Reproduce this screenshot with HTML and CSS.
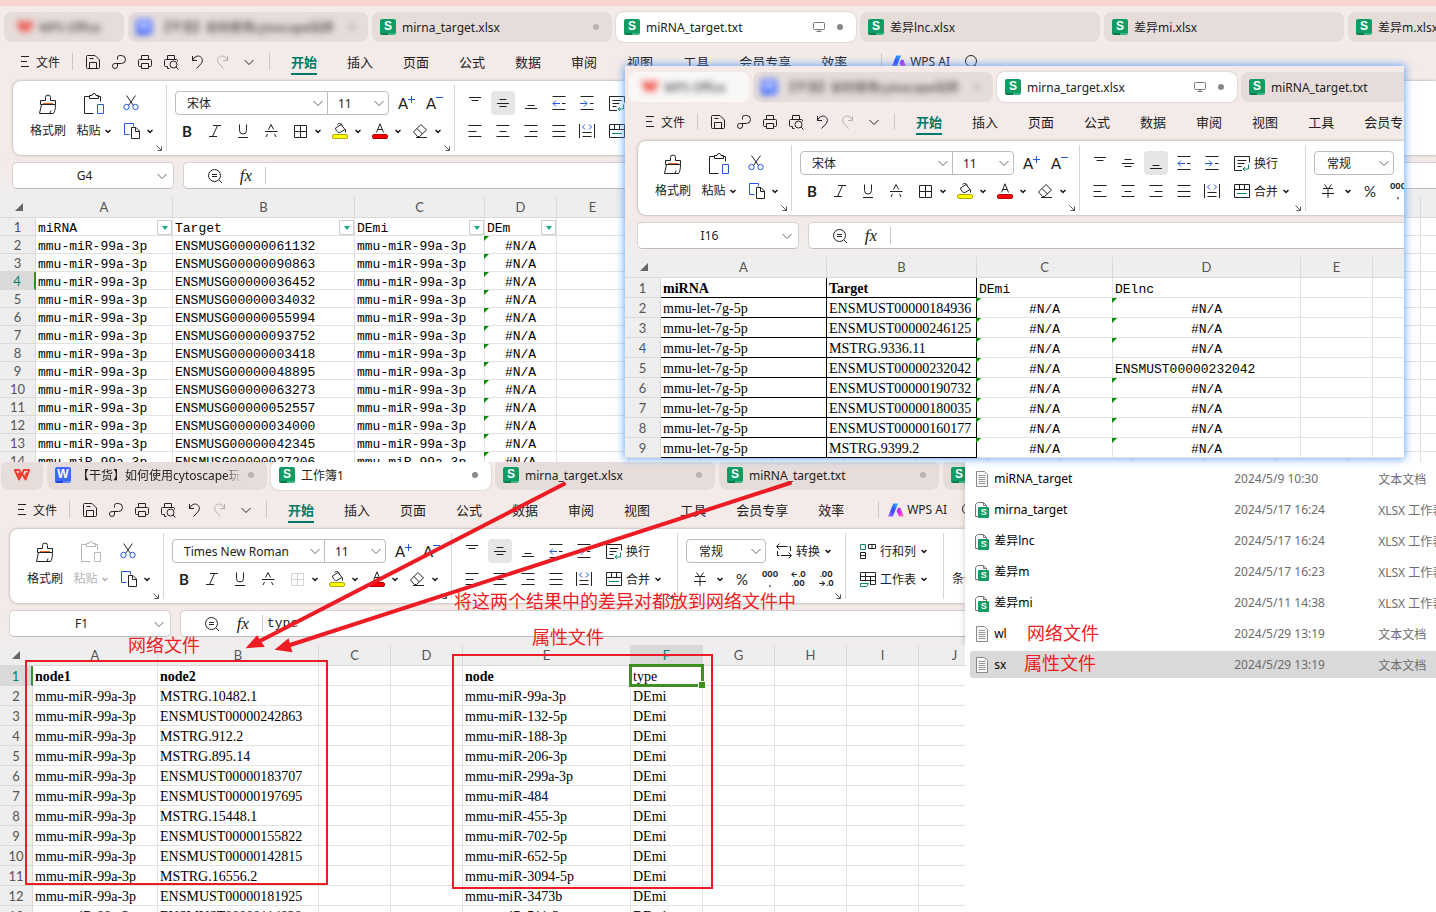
FILE: index.html
```html
<!DOCTYPE html>
<html lang="zh-CN">
<head>
    <meta charset="UTF-8">
    <meta name="viewport" content="width=device-width, initial-scale=1.0">
    <title>WPS Office</title>
    <link rel="stylesheet" href="styles.css">
</head>
<body>
    <!-- icons -->
    <svg class="sprite" aria-hidden="true">
        <symbol id="wps" viewBox="0 0 16 12">
            <path d="M.8 1h4.400l2.300 5L9.800 1h5.400l-3.600 9.500L8 4.500l-3 6z M4.200 4l1.600 3.200M12.800 3.500l-1.600 4" fill="none" stroke="#f03a2e" stroke-width="1.900" stroke-linejoin="round"/>
        </symbol>
        <symbol id="monitor" viewBox="0 0 12 12">
            <path d="M1.500 1.500h9a1 1 0 0 1 1 1v5a1 1 0 0 1-1 1h-9a1 1 0 0 1-1-1v-5a1 1 0 0 1 1-1zM6 8.500v2M3.500 10.500h5"/>
        </symbol>
        <symbol id="menu" viewBox="0 0 10 12"><path d="M1 .5h8M1 5.500h6M1 10.500h8"/></symbol>
        <symbol id="save" viewBox="0 0 16 16"><path d="M2.500 1.500h7.500l4.500 4.500v7.500a1 1 0 0 1-1 1h-11a1 1 0 0 1-1-1v-11a1 1 0 0 1 1-1zM4.500 14.500v-6h7v6M4.500 4.500h4"/></symbol>
        <symbol id="export" viewBox="0 0 16 16"><path d="M6.500 5.500v-2a2 2 0 0 1 2-2h2a4 4 0 0 1 0 8h-1.500M9.500 9.500H4.200a2.500 2.500 0 1 0 2.300 2.500V9.500"/></symbol>
        <symbol id="print" viewBox="0 0 16 16"><path d="M4.500 5.500v-4h7v4M4.500 12.500h-2a1 1 0 0 1-1-1v-5a1 1 0 0 1 1-1h11a1 1 0 0 1 1 1v5a1 1 0 0 1-1 1h-2M4.500 9.500h7v5h-7z"/></symbol>
        <symbol id="preview" viewBox="0 0 16 16"><path d="M4.500 5.500v-4h7v4M4.500 14.500v-2h-2a1 1 0 0 1-1-1v-5a1 1 0 0 1 1-1h11a1 1 0 0 1 1 1v1M4.500 14.500h2"/><circle cx="10.500" cy="10.500" r="3.500"/><path d="M13 13l2.500 2.500"/></symbol>
        <symbol id="undo" viewBox="0 0 16 16"><path d="M3.500 2v4.500H8M3.500 6.500C5 2.500 9 1 11.500 2.800c2.500 2 2.200 4.700.5 7L7.500 14.500"/></symbol>
        <symbol id="redo" viewBox="0 0 16 16"><path d="M12.500 2v4.500H8M12.500 6.500C11 2.500 7 1 4.500 2.800 2 4.800 2.300 7.500 4 9.800L8.500 14.500"/></symbol>
        <symbol id="chevron" viewBox="0 0 16 16"><path d="M3.500 6L8 10.500 12.500 6"/></symbol>
        <symbol id="arrow" viewBox="0 0 8 8"><path d="M1.500 3L4 5.300 6.500 3" stroke-width="1.600"/></symbol>
        <symbol id="ai" viewBox="0 0 15 13">
            <linearGradient id="ai-a" x1="0" y1="1" x2="1" y2="0"><stop offset="0" stop-color="#b06bff"/><stop offset=".5" stop-color="#2f4bff"/><stop offset="1" stop-color="#2fc0ff"/></linearGradient>
            <linearGradient id="ai-b" x1="0" y1="0" x2="1" y2="1"><stop offset="0" stop-color="#7a3cff"/><stop offset=".6" stop-color="#f02fe0"/><stop offset="1" stop-color="#ffb08a"/></linearGradient>
            <path d="M5 .5h4.500L4.500 12.500H0z" fill="url(#ai-a)" stroke="none"/>
            <path d="M9.500 4.500h2l3.500 8h-4.500L8 7.500z" fill="url(#ai-b)" stroke="none"/>
        </symbol>
        <symbol id="search" viewBox="0 0 16 16"><circle cx="7" cy="7" r="5.500"/><path d="M11 11l4 4"/></symbol>
        <symbol id="zoom-out" viewBox="0 0 16 16"><circle cx="7.500" cy="7.500" r="6"/><path d="M5 6.500h5M5 8.500h5M12 12l3 3"/></symbol>
        <symbol id="painter" viewBox="0 0 22 22"><path d="M3.500 7.500h5v-3a2.500 2.500 0 0 1 5 0v3h5v4h-15zM4.500 11.500l-2 9h14c1.500-2 2-5 2-9M14 17.500l-1 3"/><path d="M6 10.500h10" stroke="#e0641e"/></symbol>
        <symbol id="paste" viewBox="0 0 22 22"><path d="M6.500 3.500h-5v17h9M14.500 3.500h3v5M6.500 5.500v-3h2.500a2 2 0 0 1 4 0h2.500v3z"/><path class="blue" d="M14.500 11.500h6v9h-6z"/></symbol>
        <symbol id="cut" viewBox="0 0 16 16"><path d="M3.500.5l7 10M12.500.5l-7 10"/><circle class="blue" cx="3.500" cy="12" r="2.700"/><circle class="blue" cx="12.500" cy="12" r="2.700"/></symbol>
        <symbol id="copy" viewBox="0 0 16 16"><path class="blue" d="M5.500 11.500h-5V.5h9v3"/><path d="M7.500 4.500h4.500l3.500 3.500v7.500h-8zM11.500 4.500V8.500h4"/></symbol>
        <symbol id="launcher" viewBox="0 0 6 6"><path d="M.5.5L5 5M5.500 1.500v4h-4"/></symbol>
        <symbol id="plus" viewBox="0 0 8 8"><path class="blue" d="M3.500 0v7M0 3.500h7"/></symbol>
        <symbol id="minus" viewBox="0 0 8 8"><path class="blue" d="M0 1.500h7"/></symbol>
        <symbol id="italic" viewBox="0 0 16 16"><path d="M6 2.500h8M2 13.500h8M10.500 2.500l-5 11"/></symbol>
        <symbol id="underline" viewBox="0 0 16 16"><path d="M4.500 1.500v6a3.500 3.500 0 0 0 7 0v-6M3 14.500h10"/></symbol>
        <symbol id="strike" viewBox="0 0 16 16"><path d="M2 8.500h12.500M5.500 6.500L8 1.500l2.700 5M4.500 11l-1.500 3M11.500 11l1.500 3"/></symbol>
        <symbol id="borders" viewBox="0 0 16 16"><path d="M2.500 2.500h12v12h-12zM8.500 2.500v12M2.500 8.500h12"/></symbol>
        <symbol id="fill" viewBox="0 0 16 16"><path d="M3.500 5L9 1.500l4 5L8 9.500c-2 .5-4-1.500-4.500-4.500zM5.500 1.500c2-2 4-1 5 1M13.500 6.500v3"/><rect x=".5" y="11.500" width="15" height="4" rx="1.500" fill="#ff0" stroke="#b5a900"/></symbol>
        <symbol id="color" viewBox="0 0 16 16"><path d="M4.500 9.500L8 .8l3.500 8.700M5.700 6.500h4.600"/><rect x=".5" y="11.500" width="15" height="4" rx="1.500" fill="#f00" stroke="#b50000"/></symbol>
        <symbol id="eraser" viewBox="0 0 16 16"><path d="M1.500 9L9 1.500 14.500 7 7.500 13.500H5.500zM5 5.500l5.500 5.500M4 14.500h11"/></symbol>
        <symbol id="top" viewBox="0 0 16 16"><path d="M2 2.500h12M4.500 5.500h7"/></symbol>
        <symbol id="middle" viewBox="0 0 16 16"><path d="M4.500 4.500h7M2 8.500h12M4.500 11.500h7"/></symbol>
        <symbol id="bottom" viewBox="0 0 16 16"><path d="M4.500 10.500h7M2 13.500h12"/></symbol>
        <symbol id="outdent" viewBox="0 0 16 16"><path d="M1.500 1.500h13M1.500 14.500h13M11 8.500h3.500"/><path class="blue" d="M9 8.500H2M5 5.500l-3 3 3 3"/></symbol>
        <symbol id="indent" viewBox="0 0 16 16"><path d="M1.500 1.500h13M1.500 14.500h13M11 8.500h3.500"/><path class="blue" d="M1 8.500h7M5 5.500l3 3-3 3"/></symbol>
        <symbol id="left" viewBox="0 0 16 16"><path d="M1.500 2.500h13M1.500 8.500h8M1.500 13.500h13"/></symbol>
        <symbol id="center" viewBox="0 0 16 16"><path d="M1.500 2.500h13M4.500 8.500h7M1.500 13.500h13"/></symbol>
        <symbol id="right" viewBox="0 0 16 16"><path d="M1.500 2.500h13M6.500 8.500h8M1.500 13.500h13"/></symbol>
        <symbol id="justify" viewBox="0 0 16 16"><path d="M1.500 2.500h13M1.500 8.500h13M1.500 13.500h13"/></symbol>
        <symbol id="spread" viewBox="0 0 16 16"><path d="M.5 1v14M15.500 1v14M3.500 9.500h9M3.500 13.500h9"/><path class="blue" d="M6 1.500l-2.500 2.500L6 6.500M10 1.500l2.500 2.500L10 6.500"/></symbol>
        <symbol id="wrap" viewBox="0 0 16 16"><path d="M8 15.500H.5V1.500h15v6M3.500 5.500h9M3.500 8.500h7M3.500 11.500h4"/><path class="green" d="M14.500 9.500v4.500h-5M11 12l-2 2 2 2"/></symbol>
        <symbol id="merge" viewBox="0 0 16 16"><path d="M.5 1.500h15v13H.5zM.5 6.500h15M5.500 1.500v5M10.500 1.500v5"/><path class="green" d="M3 10.500h10"/></symbol>
        <symbol id="currency" viewBox="0 0 16 16"><path d="M4.500 1.500L7 5M11.500 1.500L9 5M3 5.500h10M2 10.500h12M8 5.500V15"/></symbol>
        <symbol id="convert" viewBox="0 0 16 16"><path d="M3.500.5l-3 3 3 3M1 3.500h10.500M1.500 8v4.500h2M14.500 8V3.500h-1M5 12.500h10M12.500 9.500l3 3-3 3"/></symbol>
        <symbol id="rowcol" viewBox="0 0 16 16"><path class="green" d="M.5 1.500h5v5h-5z"/><path d="M8.500 1.500h7v4h-7zM12 1.500v4M.5 9.500h5v6h-5zM.5 12.500h5"/></symbol>
        <symbol id="worksheet" viewBox="0 0 16 16"><path d="M.5 10V1.500h15v12H10M.5 5.500h15M5.500 1.500v8M10.500 5.500v8M.5 9.500h15"/><path class="green" d="M.5 12.500h8l-2 3h-6z"/></symbol>
        <symbol id="corner" viewBox="0 0 8 8"><path d="M8 0v8H0z" fill="#666" stroke="none"/></symbol>
        <symbol id="txt-file" viewBox="0 0 14 16"><path d="M1.500.5h8l3 3v12h-11z" fill="#fafafa" stroke="#888"/><path d="M3.500 4.500h7M3.500 6.500h7M3.500 8.500h7M3.500 10.500h7M3.500 12.500h7" stroke="#999"/></symbol>
        <symbol id="xlsx-file" viewBox="0 0 14 16"><path d="M3 14.500H.5V2.500l2-2h6l3 3V5M8.500.5v3h3" fill="#fff" stroke="#777"/><rect x="3" y="5" width="11" height="11" rx="1" fill="#0f9d63" stroke="none"/></symbol>
    </svg>

    <!-- menu, ribbon and formula bar, the same in every window -->
    <template id="toolbar">
        <nav class="menu">
            <button class="file"><svg class="burger"><use href="#menu"/></svg>文件</button>
            <span class="sep"></span>
            <div class="quick">
                <button aria-label="保存"><svg><use href="#save"/></svg></button>
                <button aria-label="输出为PDF"><svg><use href="#export"/></svg></button>
                <button aria-label="打印"><svg><use href="#print"/></svg></button>
                <button aria-label="打印预览"><svg><use href="#preview"/></svg></button>
                <button aria-label="撤销"><svg><use href="#undo"/></svg></button>
                <button aria-label="恢复" class="off"><svg><use href="#redo"/></svg></button>
                <button aria-label="更多"><svg><use href="#chevron"/></svg></button>
            </div>
            <span class="sep"></span>
            <div class="menu-tabs">
                <a href="#" class="current">开始</a>
                <a href="#">插入</a>
                <a href="#">页面</a>
                <a href="#">公式</a>
                <a href="#">数据</a>
                <a href="#">审阅</a>
                <a href="#">视图</a>
                <a href="#">工具</a>
                <a href="#">会员专享</a>
                <a href="#">效率</a>
            </div>
            <span class="sep"></span>
            <button class="ai"><svg><use href="#ai"/></svg>WPS AI</button>
            <button aria-label="搜索"><svg><use href="#search"/></svg></button>
        </nav>

        <div class="ribbon">
            <div class="group clipboard">
                <button class="big"><svg><use href="#painter"/></svg><span>格式刷</span></button>
                <button class="big paste"><svg><use href="#paste"/></svg><span>粘贴<svg class="arrow"><use href="#arrow"/></svg></span></button>
                <div class="rows">
                    <div class="row"><button class="tool" aria-label="剪切"><svg><use href="#cut"/></svg></button></div>
                    <div class="row"><button class="tool split" aria-label="复制"><svg><use href="#copy"/></svg><svg class="arrow"><use href="#arrow"/></svg></button></div>
                </div>
                <button class="launcher" aria-label="剪贴板设置"><svg><use href="#launcher"/></svg></button>
            </div>
            <div class="group font">
                <div class="rows">
                    <div class="row">
                        <div class="combo">
                            <span class="pick"><select class="font-name" aria-label="字体"><option>宋体</option><option>Times New Roman</option></select><svg><use href="#chevron"/></svg></span>
                            <span class="pick"><select class="font-size" aria-label="字号"><option>11</option></select><svg><use href="#chevron"/></svg></span>
                        </div>
                        <button class="tool size" aria-label="增大字号">A<svg><use href="#plus"/></svg></button>
                        <button class="tool size" aria-label="减小字号">A<svg><use href="#minus"/></svg></button>
                    </div>
                    <div class="row">
                        <button class="tool bold" aria-label="加粗">B</button>
                        <button class="tool" aria-label="倾斜"><svg><use href="#italic"/></svg></button>
                        <button class="tool" aria-label="下划线"><svg><use href="#underline"/></svg></button>
                        <button class="tool" aria-label="删除线"><svg><use href="#strike"/></svg></button>
                        <button class="tool split borders" aria-label="边框"><svg><use href="#borders"/></svg><svg class="arrow"><use href="#arrow"/></svg></button>
                        <button class="tool split" aria-label="填充颜色"><svg><use href="#fill"/></svg><svg class="arrow"><use href="#arrow"/></svg></button>
                        <button class="tool split" aria-label="字体颜色"><svg><use href="#color"/></svg><svg class="arrow"><use href="#arrow"/></svg></button>
                        <button class="tool split" aria-label="清除"><svg><use href="#eraser"/></svg><svg class="arrow"><use href="#arrow"/></svg></button>
                    </div>
                </div>
                <button class="launcher" aria-label="字体设置"><svg><use href="#launcher"/></svg></button>
            </div>
            <div class="group wide">
                <div class="rows">
                    <div class="row">
                        <button class="tool" data-align="top" aria-label="顶端对齐"><svg><use href="#top"/></svg></button>
                        <button class="tool" data-align="middle" aria-label="垂直居中"><svg><use href="#middle"/></svg></button>
                        <button class="tool" data-align="bottom" aria-label="底端对齐"><svg><use href="#bottom"/></svg></button>
                        <button class="tool" aria-label="减少缩进"><svg><use href="#outdent"/></svg></button>
                        <button class="tool" aria-label="增加缩进"><svg><use href="#indent"/></svg></button>
                        <button class="labelled"><svg><use href="#wrap"/></svg>换行</button>
                    </div>
                    <div class="row">
                        <button class="tool" aria-label="左对齐"><svg><use href="#left"/></svg></button>
                        <button class="tool" aria-label="水平居中"><svg><use href="#center"/></svg></button>
                        <button class="tool" aria-label="右对齐"><svg><use href="#right"/></svg></button>
                        <button class="tool" aria-label="两端对齐"><svg><use href="#justify"/></svg></button>
                        <button class="tool" aria-label="分散对齐"><svg><use href="#spread"/></svg></button>
                        <button class="labelled"><svg><use href="#merge"/></svg>合并<svg class="arrow"><use href="#arrow"/></svg></button>
                    </div>
                </div>
                <button class="launcher" aria-label="对齐设置"><svg><use href="#launcher"/></svg></button>
            </div>
            <div class="group">
                <div class="rows">
                    <div class="row">
                        <div class="combo"><span class="pick"><select class="number-format" aria-label="数字格式"><option>常规</option></select><svg><use href="#chevron"/></svg></span></div>
                        <button class="labelled"><svg><use href="#convert"/></svg>转换<svg class="arrow"><use href="#arrow"/></svg></button>
                    </div>
                    <div class="row">
                        <button class="tool split currency" aria-label="货币"><svg><use href="#currency"/></svg><svg class="arrow"><use href="#arrow"/></svg></button>
                        <button class="tool percent" aria-label="百分比">%</button>
                        <button class="tool digits" aria-label="千位分隔">000<br>,</button>
                        <button class="tool digits" aria-label="增加小数位">←.0<br>.00</button>
                        <button class="tool digits" aria-label="减少小数位">.00<br>→.0</button>
                    </div>
                </div>
                <button class="launcher" aria-label="数字设置"><svg><use href="#launcher"/></svg></button>
            </div>
            <div class="group wide">
                <div class="rows">
                    <div class="row"><button class="labelled"><svg><use href="#rowcol"/></svg>行和列<svg class="arrow"><use href="#arrow"/></svg></button></div>
                    <div class="row"><button class="labelled"><svg><use href="#worksheet"/></svg>工作表<svg class="arrow"><use href="#arrow"/></svg></button></div>
                </div>
            </div>
            <div class="group last">
                <button>条件格式</button>
            </div>
        </div>

        <div class="formula">
            <div class="name-box"><input type="text" aria-label="名称框"><svg><use href="#chevron"/></svg></div>
            <div class="formula-box">
                <button aria-label="浏览"><svg><use href="#zoom-out"/></svg></button>
                <button class="fx" aria-label="插入函数">fx</button>
                <span class="sep"></span>
                <input type="text" aria-label="编辑栏">
            </div>
        </div>
    </template>

    <main class="desktop">
        <section class="window back" data-sheet="mirnaTxt" data-cell="G4" data-align="middle">
            <div class="tabs">
                <div class="tab home blurred"><svg><use href="#wps"/></svg><span>WPS Office</span></div>
                <div class="tab blurred"><b class="logo doc">W</b><span>【干货】如何使用cytoscape玩转</span><i class="dot"></i></div>
                <div class="tab"><b class="logo">S</b><span>mirna_target.xlsx</span><i class="dot"></i></div>
                <div class="tab active"><b class="logo">S</b><span>miRNA_target.txt</span><svg class="monitor"><use href="#monitor"/></svg><i class="dot"></i></div>
                <div class="tab"><b class="logo">S</b><span>差异lnc.xlsx</span></div>
                <div class="tab"><b class="logo">S</b><span>差异mi.xlsx</span></div>
                <div class="tab"><b class="logo">S</b><span>差异m.xlsx</span></div>
            </div>
        </section>

        <section class="window book" data-sheet="network" data-cell="F1" data-value="type" data-align="middle" data-font="Times New Roman">
            <div class="tabs">
                <div class="tab home"><svg><use href="#wps"/></svg></div>
                <div class="tab faded"><b class="logo doc">W</b><span>【干货】如何使用cytoscape玩转</span><i class="dot"></i></div>
                <div class="tab active"><b class="logo">S</b><span>工作簿1</span><i class="dot"></i></div>
                <div class="tab"><b class="logo">S</b><span>mirna_target.xlsx</span><i class="dot"></i></div>
                <div class="tab"><b class="logo">S</b><span>miRNA_target.txt</span><i class="dot"></i></div>
                <div class="tab"><b class="logo">S</b></div>
            </div>
        </section>

        <section class="explorer">
            <table class="files">
                <tr><td><span class="file-icon"><svg><use href="#txt-file"/></svg></span>miRNA_target</td><td>2024/5/9 10:30</td><td>文本文档</td></tr>
                <tr><td><span class="file-icon"><svg><use href="#xlsx-file"/></svg><b>S</b></span>mirna_target</td><td>2024/5/17 16:24</td><td>XLSX 工作表</td></tr>
                <tr><td><span class="file-icon"><svg><use href="#xlsx-file"/></svg><b>S</b></span>差异lnc</td><td>2024/5/17 16:24</td><td>XLSX 工作表</td></tr>
                <tr><td><span class="file-icon"><svg><use href="#xlsx-file"/></svg><b>S</b></span>差异m</td><td>2024/5/17 16:23</td><td>XLSX 工作表</td></tr>
                <tr><td><span class="file-icon"><svg><use href="#xlsx-file"/></svg><b>S</b></span>差异mi</td><td>2024/5/11 14:38</td><td>XLSX 工作表</td></tr>
                <tr><td><span class="file-icon"><svg><use href="#txt-file"/></svg></span>wl</td><td>2024/5/29 13:19</td><td>文本文档</td></tr>
                <tr class="selected"><td><span class="file-icon"><svg><use href="#txt-file"/></svg></span>sx</td><td>2024/5/29 13:19</td><td>文本文档</td></tr>
            </table>
        </section>

        <section class="window front" data-sheet="mirnaXlsx" data-cell="I16" data-align="bottom">
            <div class="tabs">
                <div class="tab home blurred"><svg><use href="#wps"/></svg><span>WPS Office</span></div>
                <div class="tab blurred"><b class="logo doc">W</b><span>【干货】如何使用cytoscape玩转</span><i class="dot"></i></div>
                <div class="tab active"><b class="logo">S</b><span>mirna_target.xlsx</span><svg class="monitor"><use href="#monitor"/></svg><i class="dot"></i></div>
                <div class="tab"><b class="logo">S</b><span>miRNA_target.txt</span></div>
            </div>
        </section>

        <!-- red notes drawn over the windows -->
        <svg class="arrows" aria-hidden="true">
            <path d="M564 484L258 642M790 483L287 646"/>
            <polygon points="248,647 257,637 263,646"/>
            <polygon points="277,649 288,640 291,651"/>
        </svg>
        <div class="frame frame-network"></div>
        <div class="frame frame-attr"></div>
        <p class="note note-network">网络文件</p>
        <p class="note note-attr">属性文件</p>
        <p class="note note-pairs">将这两个结果中的差异对都放到网络文件中</p>
        <p class="note note-wl">网络文件</p>
        <p class="note note-sx">属性文件</p>
    </main>

    <script src="script.js"></script>
</body>
</html>
```
FILE: styles.css
```css
* {
    box-sizing: border-box;
}
body {
    margin: 0;
    font-family: "Noto Sans", "Noto Sans CJK SC", sans-serif;
    font-size: 12px;
    color: #222;
}
button {
    display: flex;
    align-items: center;
    justify-content: center;
    padding: 0;
    border: none;
    background: none;
    font: inherit;
    color: inherit;
    white-space: nowrap;
}
select, input {
    font: inherit;
    color: inherit;
    border: none;
    outline: none;
    background: none;
    appearance: none;
}
svg {
    width: 16px;
    height: 16px;
    flex: none;
    fill: none;
    stroke: currentColor;
    stroke-width: 1;
}
.sprite {
    position: absolute;
    width: 0;
    height: 0;
}
.blue {
    stroke: var(--blue, #2458e0);
}
.green {
    stroke: #0b8a62;
}

.desktop {
    position: relative;
    display: grid;
    grid-template-columns: 205fr 100fr;
    grid-template-rows: 462px 1fr;
    height: 100vh;
    overflow: hidden;
}
.window {
    --inset: 13px;
    --tab: 240px;
    min-width: 0;
    overflow: hidden;
    background: linear-gradient(#f4ebe9 0, #f4eae8 150px, #eee 200px);
}
.back {
    grid-column: 1 / 3;
    padding-top: 6px;
    border-top: 6px solid #f9d4d2;
}
.book {
    --inset: 10px;
    --tab: 220px;
}
.front {
    position: absolute;
    top: 66px;
    left: 625px;
    right: 32px;
    height: 392px;
    padding-top: 6px;
    box-shadow: 0 0 8px 1px rgba(70, 150, 245, 0.8);
}

/* document tabs */
.tabs {
    display: flex;
    gap: 4px;
    height: 30px;
    padding-left: calc(var(--inset) - 9px);
}
.book .tabs {
    margin-top: -2px;
}
.tab {
    display: flex;
    align-items: center;
    gap: 6px;
    flex: none;
    width: var(--tab);
    padding: 0 13px 0 8px;
    border-radius: 8px;
    background: #e6dddb;
    white-space: nowrap;
    overflow: hidden;
}
.tab.home {
    width: 120px;
    padding-left: 13px;
}
.book .home {
    width: 42px;
}
.front .home {
    background: #faf7f7;
}
.tab.active {
    background: #fff;
    box-shadow: 0 0 2px rgba(0, 0, 0, 0.25);
}
.logo {
    flex: none;
    width: 16px;
    height: 16px;
    border-radius: 2px;
    background: linear-gradient(to right, #067a4b 50%, #38b583 50%) bottom / 100% 2px no-repeat #0f9d63;
    color: #fff;
    font: bold 12px/15px "Liberation Sans", sans-serif;
    text-align: center;
}
.logo.doc {
    background: linear-gradient(to right, #1f46d8 50%, #5f84ff 50%) bottom / 100% 2px no-repeat #3f68ff;
}
.blurred > * {
    filter: blur(3px);
}
.faded span {
    width: 164px;
    overflow: hidden;
    mask-image: linear-gradient(to left, transparent, #000 16px);
}
.dot {
    flex: none;
    width: 6px;
    height: 6px;
    margin-left: auto;
    border-radius: 50%;
    background: #b9b4b3;
}
.active .dot {
    background: #888;
}
.monitor {
    width: 12px;
    height: 12px;
    margin-left: auto;
    color: #777;
}
.monitor + .dot {
    margin-left: 6px;
}

/* menu */
.menu {
    display: flex;
    align-items: center;
    height: 39px;
    padding-left: calc(var(--inset) + 7px);
}
.sep {
    flex: none;
    width: 1px;
    height: 17px;
    background: #cfc7c5;
}
.menu .sep {
    margin: 0 12px;
}
.file {
    gap: 6px;
}
.burger {
    width: 10px;
    height: 12px;
}
.quick {
    display: flex;
    gap: 10px;
}
.off {
    color: #b5afae;
}
.menu-tabs {
    display: flex;
    gap: 30px;
    flex: none;
    margin: 0 22px 0 9px;
    font-size: 13px;
    line-height: 22px;
}
.menu-tabs a {
    border-top: 2px solid transparent;
    border-bottom: 2px solid transparent;
    color: #222;
    text-decoration: none;
}
.menu-tabs .current {
    border-bottom-color: #007a68;
    color: #007a68;
    font-weight: bold;
}
.ai {
    gap: 3px;
    margin: 0 14px 0 -3px;
}

/* ribbon */
.ribbon {
    display: flex;
    height: 74px;
    margin-left: var(--inset);
    padding: 4px 0;
    border-radius: 8px 0 0 8px;
    background: #fff;
    box-shadow: 0 0 3px rgba(0, 0, 0, 0.35);
}
.group {
    position: relative;
    display: flex;
    flex: none;
    padding: 6px 7px 0 8px;
    border-right: 1px solid #d6d6d6;
}
.clipboard {
    gap: 5px;
    padding: 6px 11px 0 14px;
}
.wide {
    padding-right: 15px;
}
.last {
    align-items: flex-end;
    padding: 0 8px 12px;
    border-right: none;
}
.rows {
    display: flex;
    flex-direction: column;
    gap: 4px;
}
.row {
    display: flex;
    gap: 4px;
    height: 24px;
}
.tool {
    width: 24px;
    height: 24px;
    border-radius: 4px;
}
.tool.on {
    background: #e6e6e6;
}
.split {
    gap: 6px;
    width: 36px;
    padding-left: 4px;
}
.arrow {
    width: 8px;
    height: 8px;
}
.big {
    flex-direction: column;
    justify-content: flex-start;
    gap: 8px;
    width: 42px;
    height: 52px;
    padding-top: 2px;
}
.big.paste {
    width: 40px;
}
.big > svg {
    width: 22px;
    height: 22px;
}
.big span {
    display: flex;
    align-items: center;
    gap: 3px;
    line-height: 16px;
}
.labelled {
    gap: 4px;
    padding-left: 6px;
}
.size {
    align-items: flex-start;
    font: 15px/24px Lato, sans-serif;
}
.size svg {
    width: 8px;
    height: 8px;
    margin-top: 5px;
}
.bold {
    font: bold 15px Lato, sans-serif;
}
.percent {
    font: 15px Lato, sans-serif;
}
.digits {
    display: block;
    font: bold 8px/9px Inter, sans-serif;
}
.currency {
    gap: 8px;
    width: 40px;
}
.launcher {
    position: absolute;
    right: 4px;
    bottom: 0;
    color: #555;
}
.launcher svg {
    width: 6px;
    height: 6px;
}
.combo {
    display: flex;
    border: 1px solid #bdbdbd;
    border-radius: 4px;
}
.font .combo {
    margin-right: 2px;
}
.pick {
    position: relative;
    display: flex;
}
.pick + .pick {
    border-left: 1px solid #bdbdbd;
}
.pick svg {
    position: absolute;
    top: 3px;
    right: 1px;
    color: #666;
    pointer-events: none;
}
.font-name {
    width: 151px;
    padding: 0 11px;
}
.font-size {
    width: 60px;
    padding: 0 10px;
}
.number-format {
    width: 78px;
    padding: 0 12px;
}
.book .borders > :first-child {
    color: #aaa;
    stroke-dasharray: 1 1;
}
.book .paste {
    --blue: #bbb;
    color: #b5b5b5;
}

/* formula bar */
.formula {
    display: flex;
    gap: 9px;
    height: 27px;
    margin: 7px 0 8px;
    padding-left: calc(var(--inset) - 1px);
}
.name-box, .formula-box {
    display: flex;
    align-items: center;
    border: 1px solid #d4d1d0;
    border-bottom-color: #bbb;
    background: #fff;
}
.name-box {
    width: 162px;
    padding-right: 3px;
    border-radius: 5px;
    flex: none;
}
.name-box svg {
    color: #666;
}
.name-box input {
    flex: 1;
    min-width: 0;
    padding-left: 4px;
    font-size: 12px;
    text-align: center;
}
.formula-box {
    flex: 1;
    min-width: 0;
    padding-left: 23px;
    border-right: none;
    border-radius: 5px 0 0 5px;
}
.formula-box input {
    flex: 1;
    min-width: 0;
    padding: 0 4px;
    font: 13px "Liberation Mono", monospace;
}
.fx {
    width: 14px;
    margin: 0 12px 0 16px;
    font: italic 17px "Liberation Serif", serif;
}

/* sheets */
.sheet {
    table-layout: fixed;
    border-collapse: separate;
    border-spacing: 0;
    color: #000;
}
.sheet th, .sheet td {
    position: relative;
    height: 18px;
    padding: 0 2px;
    border-right: 1px solid #e2e2e2;
    border-bottom: 1px solid #e2e2e2;
    white-space: nowrap;
}
.sheet th {
    background: #eee;
    color: #555;
    font: 13px Lato, sans-serif;
    border-color: #d9d9d9;
}
.sheet thead th {
    height: 21px;
}
.sheet td {
    padding-top: 4px;
    background: #fff;
    font: 13px/13px "Liberation Mono", monospace;
}
.sheet .corner {
    padding-right: 12px;
    border-right-color: transparent;
}
.corner svg {
    display: block;
    width: 8px;
    height: 8px;
    margin-left: auto;
}
.sheet.tall td, .sheet.tall tbody th {
    height: 20px;
}
.sheet .serif {
    padding-top: 2px;
    font: 14px "Liberation Serif", serif;
}
.sheet .strong {
    font-weight: bold;
}
.sheet .boxed {
    border-color: #000;
}
.sheet th.hot {
    background: #d9d9d9;
    color: #00806c;
}
.sheet tbody th.hot {
    border-right: 2px solid #3f8f20;
}
.sheet .error {
    text-align: center;
}
.flag::before {
    content: "";
    position: absolute;
    top: 0;
    left: -1px;
    border-top: 5px solid #078a07;
    border-right: 5px solid transparent;
}
.filter {
    position: absolute;
    top: 2px;
    right: 0;
    width: 15px;
    height: 15px;
    border: 1px solid #c9ced2;
    background: #fff;
}
.filter::after {
    content: "";
    border: 3px solid transparent;
    border-top: 4px solid #14b57a;
    border-bottom: none;
}
.cursor::after {
    content: "";
    position: absolute;
    z-index: 1;
    inset: -2px;
    border: 3px solid #3f8f20;
}
.cursor::before {
    content: "";
    position: absolute;
    z-index: 2;
    right: -4px;
    bottom: -4px;
    width: 6px;
    height: 6px;
    border: 1px solid #fff;
    background: #3f8f20;
}

/* file list */
.explorer {
    min-width: 0;
    overflow: hidden;
    padding-left: 5px;
    background: #fff;
    box-shadow: 0 0 6px rgba(0, 0, 0, 0.2);
}
.files {
    width: 100%;
    margin-top: -1px;
    table-layout: fixed;
    border-spacing: 0 4px;
}
.files td {
    height: 27px;
    padding: 0;
    color: #6d6d6d;
    white-space: nowrap;
}
.files td:first-child {
    width: 264px;
    padding-left: 5px;
    border-radius: 3px 0 0 3px;
    color: #000;
}
.files td:nth-child(2) {
    width: 144px;
}
.file-icon {
    position: relative;
    display: inline-block;
    width: 14px;
    height: 16px;
    margin-right: 5px;
    vertical-align: middle;
}
.file-icon svg {
    display: block;
    width: 14px;
}
.file-icon b {
    position: absolute;
    right: 0;
    bottom: 0;
    width: 11px;
    color: #fff;
    font: bold 9px/11px "Liberation Sans", sans-serif;
    text-align: center;
}
.files .selected td {
    background: #d9d9d9;
}

/* notes */
.arrows, .frame, .note {
    position: absolute;
    margin: 0;
}
.arrows {
    top: 0;
    left: 0;
    width: 100%;
    height: 100%;
    stroke: #ed1c24;
    stroke-width: 4;
    stroke-linecap: round;
    pointer-events: none;
}
.arrows polygon {
    fill: #ed1c24;
    stroke-width: 2;
}
.frame {
    border: 2px solid #ed1c24;
}
.frame-network {
    top: 660px;
    left: 25px;
    width: 303px;
    height: 225px;
}
.frame-attr {
    top: 654px;
    left: 452px;
    width: 261px;
    height: 235px;
}
.note {
    color: #ed1c24;
    font-size: 18px;
    line-height: 24px;
}
.note-network {
    top: 633px;
    left: 128px;
}
.note-attr {
    top: 625px;
    left: 532px;
}
.note-pairs {
    top: 589px;
    left: 454px;
}
.note-wl {
    top: 621px;
    left: 1027px;
}
.note-sx {
    top: 651px;
    left: 1024px;
}
```
FILE: script.js
```js
const NA = '#N/A';
const MIR = 'mmu-miR-99a-3p';
const LET = 'mmu-let-7g-5p';

const sheets = {
    mirnaTxt: {
        widths: [36, 137, 182, 130, 72, 72, 72, 72, 72, 72, 72, 72, 72, 72, 72, 72, 72, 72],
        hotRow: 4,
        filters: 4,
        rows: [
            ['miRNA', 'Target', 'DEmi', 'DEm'],
            ...['61132', '90863', '36452', '34032', '55994', '93752', '03418', '48895', '63273', '52557', '34000', '42345', '27206']
                .map(id => [MIR, 'ENSMUSG000000' + id, MIR, NA])
        ]
    },
    mirnaXlsx: {
        widths: [36, 166, 150, 136, 188, 72, 72],
        tall: true,
        serif: [0, 1],
        boxed: true,
        rows: [
            ['miRNA', 'Target', 'DEmi', 'DElnc'],
            [LET, 'ENSMUST00000184936', NA, NA],
            [LET, 'ENSMUST00000246125', NA, NA],
            [LET, 'MSTRG.9336.11', NA, NA],
            [LET, 'ENSMUST00000232042', NA, 'ENSMUST00000232042'],
            [LET, 'ENSMUST00000190732', NA, NA],
            [LET, 'ENSMUST00000180035', NA, NA],
            [LET, 'ENSMUST00000160177', NA, NA],
            [LET, 'MSTRG.9399.2', NA, NA]
        ]
    },
    network: {
        widths: [33, 125, 161, 72, 72, 168, 72, 72, 72, 72, 72],
        tall: true,
        serif: [0, 1, 4, 5],
        hotRow: 1,
        hotCol: 5,
        rows: [
            ['node1', 'node2', '', '', 'node', 'type'],
            [MIR, 'MSTRG.10482.1', '', '', 'mmu-miR-99a-3p', 'DEmi'],
            [MIR, 'ENSMUST00000242863', '', '', 'mmu-miR-132-5p', 'DEmi'],
            [MIR, 'MSTRG.912.2', '', '', 'mmu-miR-188-3p', 'DEmi'],
            [MIR, 'MSTRG.895.14', '', '', 'mmu-miR-206-3p', 'DEmi'],
            [MIR, 'ENSMUST00000183707', '', '', 'mmu-miR-299a-3p', 'DEmi'],
            [MIR, 'ENSMUST00000197695', '', '', 'mmu-miR-484', 'DEmi'],
            [MIR, 'MSTRG.15448.1', '', '', 'mmu-miR-455-3p', 'DEmi'],
            [MIR, 'ENSMUST00000155822', '', '', 'mmu-miR-702-5p', 'DEmi'],
            [MIR, 'ENSMUST00000142815', '', '', 'mmu-miR-652-5p', 'DEmi'],
            [MIR, 'MSTRG.16556.2', '', '', 'mmu-miR-3094-5p', 'DEmi'],
            [MIR, 'ENSMUST00000181925', '', '', 'mmu-miR-3473b', 'DEmi'],
            [MIR, 'ENSMUST00000114828', '', '', 'mmu-miR-511-3p', 'DEmi']
        ]
    }
};

function cell(sheet, r, c) {
    const text = sheet.rows[r][c] || '';
    const names = [];
    if (sheet.serif && sheet.serif.includes(c)) {
        names.push('serif');
        if (r === 0 && text !== 'type') names.push('strong');
        if (sheet.boxed) names.push('boxed');
    }
    if (text === NA) names.push('error', 'flag');
    if (r === 0 && c === sheet.hotCol) names.push('cursor');
    const filter = r === 0 && c < (sheet.filters || 0) ? '<button class="filter" aria-label="筛选"></button>' : '';
    return `<td class="${names.join(' ')}">${text}${filter}</td>`;
}

function buildSheet(sheet) {
    const total = sheet.widths.reduce((a, b) => a + b, 0);
    const cols = sheet.widths.slice(1).map((w, i) => i);
    const head = cols.map(c => `<th class="${c === sheet.hotCol ? 'hot' : ''}">${String.fromCharCode(65 + c)}</th>`).join('');
    const body = sheet.rows.map((row, r) =>
        `<tr><th class="${r + 1 === sheet.hotRow ? 'hot' : ''}">${r + 1}</th>${cols.map(c => cell(sheet, r, c)).join('')}</tr>`
    ).join('');
    return `<table class="sheet ${sheet.tall ? 'tall' : ''}" style="width: ${total}px">
        <colgroup>${sheet.widths.map(w => `<col style="width: ${w}px">`).join('')}</colgroup>
        <thead><tr><th class="corner"><svg><use href="#corner"/></svg></th>${head}</tr></thead>
        <tbody>${body}</tbody>
    </table>`;
}

document.querySelectorAll('.window').forEach(win => {
    win.append(document.getElementById('toolbar').content.cloneNode(true));
    win.querySelector('.font-name').value = win.dataset.font || '宋体';
    win.querySelector(`.tool[data-align="${win.dataset.align}"]`).classList.add('on');
    win.querySelector('.name-box input').value = win.dataset.cell;
    win.querySelector('.formula-box input').value = win.dataset.value || '';
    win.insertAdjacentHTML('beforeend', buildSheet(sheets[win.dataset.sheet]));
});
```
